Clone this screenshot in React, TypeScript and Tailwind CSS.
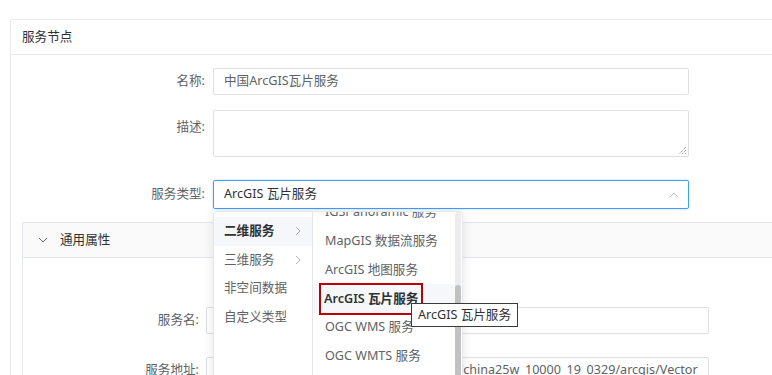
import React from 'react';

const font = { fontFamily: '"Noto Sans", "Noto Sans CJK SC", sans-serif' };

const leftItems = [
  { label: '二维服务', arrow: true, active: true },
  { label: '三维服务', arrow: true },
  { label: '非空间数据' },
  { label: '自定义类型' },
];

const rightItems = [
  { label: 'IGSPanoramic 服务' },
  { label: 'MapGIS 数据流服务' },
  { label: 'ArcGIS 地图服务' },
  { label: 'ArcGIS 瓦片服务', active: true },
  { label: 'OGC WMS 服务' },
  { label: 'OGC WMTS 服务' },
];

const Chevron = ({ dir, className }: { dir: 'up' | 'down' | 'right'; className?: string }) => {
  const d = dir === 'up' ? 'M2 8 L6 4 L10 8' : dir === 'down' ? 'M2 4 L6 8 L10 4' : 'M4 2 L8 6 L4 10';
  return (
    <svg width="12" height="12" viewBox="0 0 12 12" className={className}>
      <path d={d} fill="none" stroke="currentColor" strokeWidth="1" />
    </svg>
  );
};

const Cascader: React.FC = () => (
  <div className="absolute left-0 top-full mt-[2px] z-10 flex h-[170px] w-[250px] rounded-[4px] border border-[#e4e7ed] bg-white shadow-[0_2px_12px_rgba(0,0,0,0.1)]">
    {/* first level */}
    <div className="w-[99px] border-r border-[#e4e7ed] pt-[5px]">
      {leftItems.map((it) => (
        <div
          key={it.label}
          className={`flex h-[28.7px] items-center justify-between pl-[10px] pr-[8px] text-[12.6px] ${
            it.active ? 'bg-[#f5f7fa] font-semibold text-[#303133]' : 'text-[#606266]'
          }`}
        >
          <span>{it.label}</span>
          {it.arrow && <Chevron dir="right" className="text-[#b0b3b8]" />}
        </div>
      ))}
    </div>
    {/* second level, scrolled */}
    <div className="relative flex flex-1 overflow-hidden">
      <div className="-mt-[14px] flex-1">
        {rightItems.map((it) => (
          <div
            key={it.label}
            className={`flex h-[28.8px] items-center pl-[12px] text-[12.6px] ${
              it.active ? 'bg-[#f5f7fa] font-semibold text-[#303133]' : 'text-[#606266]'
            }`}
          >
            {it.active ? (
              <span className="-ml-[6px] border-2 border-[#c00000] px-[3px] py-[5px] leading-[18px]">{it.label}</span>
            ) : (
              it.label
            )}
          </div>
        ))}
      </div>
      <div className="mr-[1px] flex w-[6px] flex-col rounded-[3px] bg-[#ececec]">
        <div className="h-[73px]" />
        <div className="flex-1 rounded-[3px] bg-[#c1c1c1]" />
      </div>
    </div>
    {/* tooltip */}
    <div className="absolute left-[197px] top-[91px] whitespace-nowrap border border-[#3a3a3a] bg-white px-[6px] py-[2px] text-[12.6px] leading-[18px] text-[#303133]">
      ArcGIS 瓦片服务
    </div>
  </div>
);

export default function App() {
  return (
    <div className="h-[375px] w-[772px] overflow-hidden bg-white pl-[10px] pt-[19px]" style={font}>
      <div className="w-[800px] rounded-[2px] border border-[#e8eaee] bg-white">
        <div className="flex h-[35px] items-center border-b border-[#e8eaee] pl-[11px] text-[12.6px] text-[#303133]">
          服务节点
        </div>

        <div className="pt-[13px]">
          {/* 名称 */}
          <div className="flex items-center">
            <label className="w-[202px] pr-[8px] text-right text-[12.6px] text-[#606266]">名称:</label>
            <div className="flex h-[27px] w-[476px] items-center rounded-[2px] border border-[#dcdfe6] px-[10px] text-[12.6px] text-[#606266]">
              中国ArcGIS瓦片服务
            </div>
          </div>

          {/* 描述 */}
          <div className="mt-[15px] flex items-start">
            <label className="w-[202px] pr-[8px] pt-[8px] text-right text-[12.6px] text-[#606266]">描述:</label>
            <div className="relative h-[47px] w-[476px] rounded-[2px] border border-[#dcdfe6]">
              <svg width="10" height="10" viewBox="0 0 10 10" className="absolute bottom-[1px] right-[1px]">
                <path d="M9 2 L2 9 M9 5 L5 9 M9 8 L8 9" stroke="#555" strokeWidth="0.8" strokeDasharray="1 1" />
              </svg>
            </div>
          </div>

          {/* 服务类型 */}
          <div className="mt-[23px] flex items-center">
            <label className="w-[202px] pr-[8px] text-right text-[12.6px] text-[#606266]">服务类型:</label>
            <div className="relative">
              <div className="flex h-[29px] w-[476px] items-center justify-between rounded-[2px] border border-[#409eff] pl-[10px] pr-[8px] text-[12.6px] text-[#303133] shadow-[0_0_2px_rgba(64,158,255,0.5)]">
                <span>ArcGIS 瓦片服务</span>
                <Chevron dir="up" className="text-[#c0c4cc]" />
              </div>
              <Cascader />
            </div>
          </div>

          {/* 通用属性 */}
          <div className="ml-[11px] mt-[13px] border border-[#e4e7ed]">
            <div className="flex h-[35px] items-center gap-[11px] border-b border-[#e4e7ed] bg-[#fafafa] pl-[14px] text-[12.6px] text-[#303133]">
              <Chevron dir="down" className="text-[#606266]" />
              <span>通用属性</span>
            </div>
            <div className="pt-[49px]">
              <div className="flex items-center">
                <label className="w-[183px] pr-[7px] text-right text-[12.6px] text-[#606266]">服务名:</label>
                <div className="h-[27px] w-[503px] rounded-[2px] border border-[#dcdfe6]" />
              </div>
              <div className="mt-[23px] flex items-center">
                <label className="w-[183px] pr-[7px] text-right text-[12.6px] text-[#606266]">服务地址:</label>
                <div className="flex h-[27px] w-[503px] items-center rounded-[2px] border border-[#dcdfe6] px-[10px] text-[12.6px] text-[#606266]">
                  <div className="flex-1 overflow-hidden whitespace-nowrap">
                    https://develop.smaryun.com/arcgis/rest/china25w_10000_19_0329/arcgis/VectorTileServer
                  </div>
                </div>
              </div>
              <div className="h-[40px]" />
            </div>
          </div>
        </div>
      </div>
    </div>
  );
}
